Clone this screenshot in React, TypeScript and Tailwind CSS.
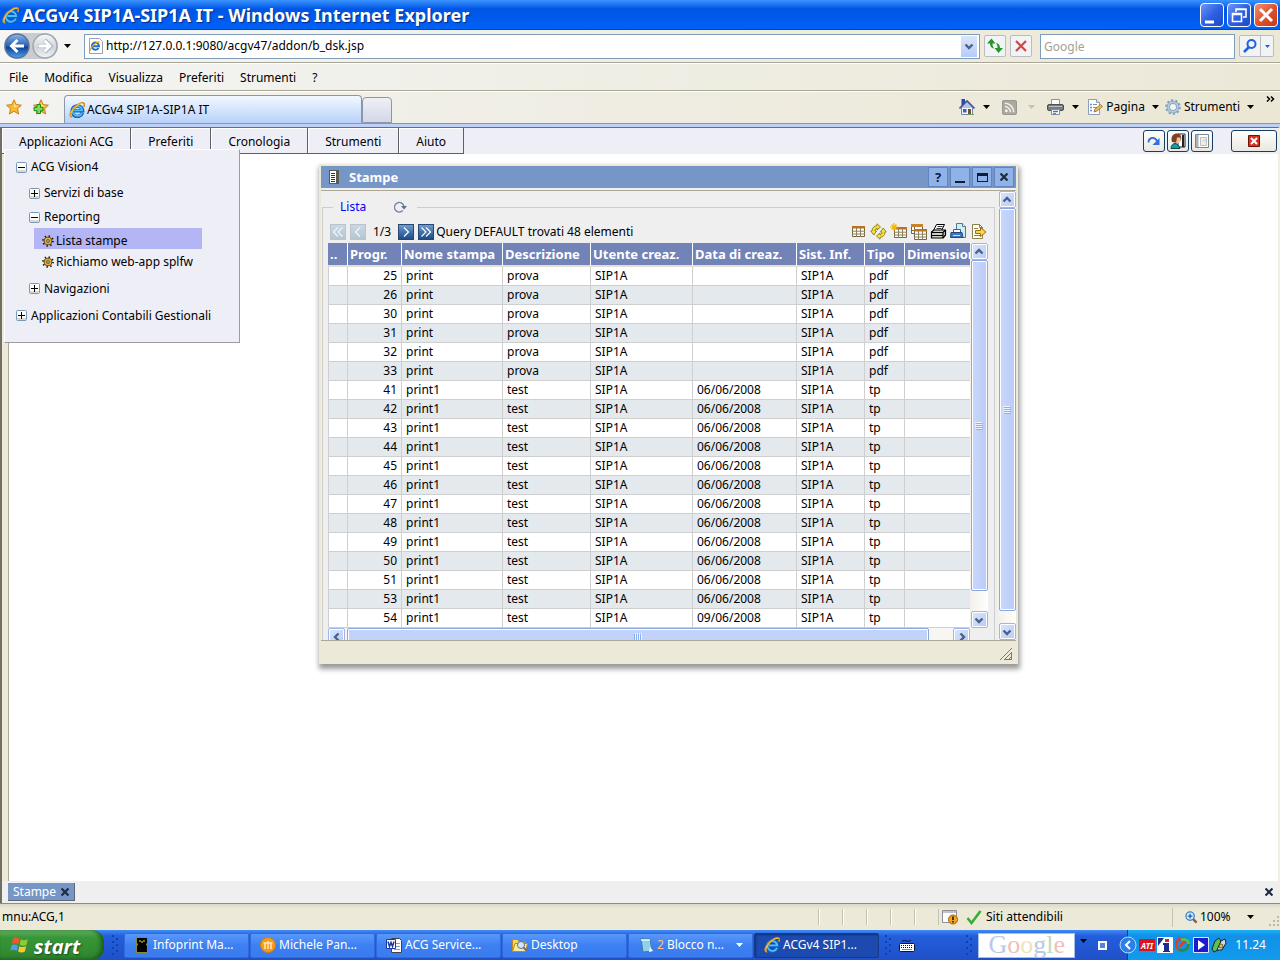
import type { ReactNode } from "react"
import clsx from "clsx"

const menus = ["Applicazioni ACG", "Preferiti", "Cronologia", "Strumenti", "Aiuto"]
const ieMenus = ["File", "Modifica", "Visualizza", "Preferiti", "Strumenti", "?"]

type Row = { id: number; name: string; descr: string; date: string; tipo: string }

const rows: Row[] = [
  ...[25, 26, 30, 31, 32, 33].map((id) => ({ id, name: "print", descr: "prova", date: "", tipo: "pdf" })),
  ...[41, 42, 43, 44, 45, 46, 47, 48, 49, 50, 51, 53].map((id) => ({
    id,
    name: "print1",
    descr: "test",
    date: "06/06/2008",
    tipo: "tp",
  })),
  { id: 54, name: "print1", descr: "test", date: "09/06/2008", tipo: "tp" },
]

const columns = [
  { label: "..", width: "w-5" },
  { label: "Progr.", width: "w-[54px]" },
  { label: "Nome stampa", width: "w-[101px]" },
  { label: "Descrizione", width: "w-[88px]" },
  { label: "Utente creaz.", width: "w-[102px]" },
  { label: "Data di creaz.", width: "w-[104px]" },
  { label: "Sist. Inf.", width: "w-[68px]" },
  { label: "Tipo", width: "w-10" },
  { label: "Dimension", width: "w-[90px]" },
]

function IeIcon({ className = "size-4" }: { className?: string }) {
  return (
    <svg viewBox="0 0 16 16" className={className} fill="none">
      <path d="M13.400 10.800A5.200 5.200 0 1 1 13.600 8.700H5" stroke="#0f5fc0" strokeWidth="3.600" />
      <path d="M13 10.800A4.900 4.900 0 1 1 13.300 8.400H5" stroke="#4fbdf8" strokeWidth="1.800" />
      <path d="M3.200 14.800C-.2 15.200 1 10 5 5.800 8.800 2 13.400-.2 14.900 1.300c.9.9.4 2.400-.3 3.500" stroke="#d9900f" strokeWidth="1.700" />
      <path d="M2.300 14C1 12 3 8.500 6 5.500 9 2.600 12.500.9 14 1.600" stroke="#ffd95a" strokeWidth=".9" />
    </svg>
  )
}

function Caret({ className = "text-black" }: { className?: string }) {
  return (
    <svg viewBox="0 0 7 4" className={clsx("h-1 w-[7px] shrink-0", className)}>
      <path d="M0 0h7L3.500 4z" fill="currentColor" />
    </svg>
  )
}

function Chevron({ dir }: { dir: "up" | "down" | "left" | "right" }) {
  const d = {
    up: "M1.500 6.500 5 3l3.500 3.500",
    down: "M1.500 3.500 5 7l3.500-3.500",
    left: "M6.500 1.500 3 5l3.500 3.500",
    right: "M3.500 1.500 7 5 3.500 8.500",
  }[dir]
  return (
    <svg viewBox="0 0 10 10" className="size-[10px] shrink-0">
      <path d={d} fill="none" stroke="#4d6185" strokeWidth="2.400" />
    </svg>
  )
}

function ScrollButton({ dir }: { dir: "up" | "down" | "left" | "right" }) {
  return (
    <button
      aria-label={`Scroll ${dir}`}
      className="flex size-[17px] shrink-0 items-center justify-center rounded-xs border border-[#9db5ea] bg-linear-to-br from-[#dbe5fe] to-[#b6cbf9] shadow-[inset_0_0_0_1px_#fff]"
    >
      <Chevron dir={dir} />
    </button>
  )
}

function VerticalScroll({ gap }: { gap: string }) {
  return (
    <div className="flex w-[18px] shrink-0 flex-col items-center bg-linear-to-r from-[#f3f1ec] to-[#fefefb]">
      <ScrollButton dir="up" />
      <div className="flex w-[17px] grow items-center justify-center rounded-xs border border-[#8ba7dd] bg-linear-to-r from-[#c9d8fc] to-[#b9cbf8] shadow-[inset_0_0_0_1px_#fff]">
        <Grip />
      </div>
      <div className={gap} />
      <ScrollButton dir="down" />
    </div>
  )
}

function Grip({ className }: { className?: string }) {
  return (
    <svg viewBox="0 0 8 8" className={clsx("size-2", className)}>
      <path d="M0 .5h7M0 2.500h7M0 4.500h7M0 6.500h7" stroke="#eef4fe" />
      <path d="M1 1.500h7M1 3.500h7M1 5.500h7M1 7.500h7" stroke="#8cb0f8" />
    </svg>
  )
}

function TreeBox({ open }: { open?: boolean }) {
  return (
    <svg viewBox="0 0 11 11" className="size-[11px] shrink-0">
      <rect x=".5" y=".5" width="10" height="10" rx="1" fill="#fdfdfb" stroke="#7898b5" />
      <path d="M1 8h9v2H1z" fill="#dcd8cb" />
      <path d={open ? "M2 5.500h7" : "M2 5.500h7M5.500 2v7"} stroke="#000" />
    </svg>
  )
}

function Gear() {
  return (
    <svg viewBox="0 0 12 12" className="size-3 shrink-0">
      <circle cx="6" cy="6" r="5" fill="none" stroke="#1d1608" strokeWidth="1.800" strokeDasharray="1.400 2.527" />
      <circle cx="6" cy="6" r="3.900" fill="#f3c04a" stroke="#3a2a06" strokeWidth=".8" />
      <path d="M6 2.500v7M2.500 6h7M3.600 3.600l4.800 4.800M8.400 3.600 3.600 8.400" stroke="#a8741a" strokeWidth=".5" />
      <circle cx="6" cy="6" r="1.300" fill="#fff" stroke="#2b2005" strokeWidth=".8" />
    </svg>
  )
}

function HomeIcon() {
  return (
    <svg viewBox="0 0 16 16" className="size-4">
      <path d="M2.500 8v7.500h11V8L8 2.500z" fill="#f4f6fb" stroke="#7684a5" />
      <path d="M2.500 0h3.500v4.500L2.500 7z" fill="#2a49b5" />
      <path d="M2 9 8.500 2.500 14.500 9z" fill="#b8c3de" />
      <path d="M.5 9.500 8 2l7.500 7.500" fill="none" stroke="#44549b" strokeWidth="1.600" />
      <path d="M9 10h3v5.500H9z" fill="#7b4d34" />
      <path d="M4 10h3.500v3.500H4z" fill="#2f68c4" />
      <path d="M9 15.500h6" stroke="#71a455" />
    </svg>
  )
}

function RssIcon() {
  return (
    <svg viewBox="0 0 16 16" className="size-[15px]">
      <rect x=".5" y=".5" width="15" height="15" rx="1.500" fill="#aaa89f" stroke="#96948b" />
      <circle cx="4.600" cy="11.400" r="1.600" fill="#f2f0e6" />
      <path d="M3 7a6 6 0 0 1 6 6M3 3.500A9.500 9.500 0 0 1 12.500 13" fill="none" stroke="#f2f0e6" strokeWidth="1.700" />
    </svg>
  )
}

function PrinterIcon() {
  return (
    <svg viewBox="0 0 17 16" className="h-4 w-[17px]">
      <path d="M4.500.5h8v6h-8z" fill="#fbfbfb" stroke="#8f9297" />
      <rect x=".5" y="5.500" width="16" height="6" rx="1.500" fill="#777b82" stroke="#4c4f55" />
      <path d="M2 7.500h13" stroke="#b9bdc4" />
      <path d="M4.500 10.500h8v5h-8z" fill="#fff" stroke="#888c92" />
      <path d="M6 12.500h5" stroke="#2d7fd1" strokeWidth="1.500" />
      <path d="M6 14.500h3" stroke="#4ca63b" />
    </svg>
  )
}

function PageEditIcon() {
  return (
    <svg viewBox="0 0 16 16" className="size-4">
      <path d="M1.500.5h8l3 3v12h-11z" fill="#fcfdff" stroke="#8d9db7" />
      <path d="M9.500.5v3h3" fill="#dce6f6" stroke="#8d9db7" />
      <path d="M3 5.500h2M3 8.500h2M3 11.500h2" stroke="#6f8fca" strokeWidth="1.500" />
      <path d="M6 5.500h4M6 8.500h4" stroke="#8a8f99" />
      <path d="m7 13 1-3 5.500-4.500 2 2L10 12z" fill="#edbd55" stroke="#8c6b39" strokeWidth=".8" />
    </svg>
  )
}

function ToolsIcon() {
  return (
    <svg viewBox="0 0 16 16" className="size-4" fill="none">
      <circle cx="8" cy="8" r="6.900" stroke="#7f9fbe" strokeWidth="1.800" strokeDasharray="2.300 2.035" />
      <circle cx="8" cy="8" r="4.600" stroke="#86a5c4" strokeWidth="3.400" />
      <circle cx="8" cy="8" r="4.700" stroke="#b7cde1" strokeWidth="1.600" />
      <circle cx="8" cy="8" r="2.800" fill="#f5f4ee" />
    </svg>
  )
}

function Star({ add }: { add?: boolean }) {
  return (
    <svg viewBox="0 0 16 16" className="size-4">
      <path
        d="m8 .8 2.200 4.800 5.200.6-3.900 3.500 1.100 5.300L8 12.300 3.400 15l1.100-5.300L.6 6.200l5.200-.6z"
        fill="#fdb927"
        stroke="#c3761a"
        strokeWidth=".9"
      />
      <path d="m8 3 1.200 3.300 3.300.4L8 8.500z" fill="#ffe48a" />
      {add && <path d="M4 5.500h3.500V8.300H10v3.400H7.500v2.800H4v-2.800H1V8.300h3z" fill="#7bdc56" stroke="#168a1b" />}
    </svg>
  )
}

function NavArrow({ back }: { back?: boolean }) {
  return (
    <svg viewBox="0 0 26 26" className="size-[26px]">
      <defs>
        <linearGradient id="navBlue" x1="0" y1="0" x2="0" y2="1">
          <stop offset="0" stopColor="#8db5ea" />
          <stop offset=".5" stopColor="#2460b8" />
          <stop offset=".55" stopColor="#0d3f96" />
          <stop offset="1" stopColor="#4aa5f0" />
        </linearGradient>
        <linearGradient id="navGrey" x1="0" y1="0" x2="0" y2="1">
          <stop offset="0" stopColor="#f8fafb" />
          <stop offset=".55" stopColor="#cfd5dc" />
          <stop offset="1" stopColor="#f1f4f7" />
        </linearGradient>
      </defs>
      <circle cx="13" cy="13" r="12" fill={back ? "url(#navBlue)" : "url(#navGrey)"} stroke={back ? "#5c7394" : "#a1a7b0"} strokeWidth="1.500" />
      <path
        d={back ? "M20 13H8m5.500-6L7.500 13l6 6" : "M6 13h12m-5.500-6 6 6-6 6"}
        fill="none"
        stroke={back ? "#fff" : "#a9b0ba"}
        strokeWidth={back ? "3" : "4.200"}
      />
      {!back && <path d="M6.500 13h11m-5-5.500 5.500 5.500-5.500 5.500" fill="none" stroke="#fff" strokeWidth="2.800" />}
    </svg>
  )
}

function GridIcon({ star, double }: { star?: boolean; double?: boolean }) {
  return (
    <svg viewBox="0 0 17 17" className="size-[17px]">
      {double && (
        <>
          <path d="M1.500 1.500h11v9h-11z" fill="#fff" stroke="#7a6546" />
          <path d="M1 1h12v3H1z" fill="#c8832c" />
          <path d="M1 7.500h10M4.500 4v7" stroke="#7a6546" />
        </>
      )}
      <g transform={double ? "translate(2 3)" : star ? "translate(2 1)" : undefined}>
        <path d="M2.500 3.500h12v10h-12z" fill="#fff" stroke="#6f6445" />
        <path d="M2 3h13v2.500H2z" fill="#b8741f" />
        <path d="M2 8.200h13M2 11h13M6.500 5v9M10.500 5v9" stroke="#8a805c" />
      </g>
      {star && <path d="M4 0v8M0 4h8M1.500 1.500l5 5M6.500 1.500l-5 5" stroke="#f5b800" strokeWidth="1.200" />}
    </svg>
  )
}

function ReloadIcon() {
  return (
    <svg viewBox="0 0 17 17" className="size-[17px]" strokeLinejoin="round">
      <path d="M7 2.500C4 3 2 5 2 8L.8 8l3 4 2.700-4H5c0-1.500.8-2.600 2-3v2l3.500-3L7 .8z" fill="#f6e33a" stroke="#8d7b10" strokeWidth=".9" />
      <path d="M10 14.500c3-.5 5-2.500 5-5.500h1.200l-3-4-2.700 4H12c0 1.500-.8 2.600-2 3v-2l-3.500 3L10 16.200z" fill="#f6e33a" stroke="#8d7b10" strokeWidth=".9" />
    </svg>
  )
}

function PrintBlackIcon() {
  return (
    <svg viewBox="0 0 17 17" className="size-[17px]" strokeLinejoin="round">
      <path d="m6.500 1.500 8 0-3 6h-8z" fill="#fff" stroke="#000" />
      <path d="M7.500 3.500h5M6.500 5.500h5" stroke="#000" strokeWidth=".8" />
      <path d="m1.500 9 2.500-2h11.500v5L13 15H1.500z" fill="#cfcfcf" stroke="#000" strokeWidth="1.200" />
      <path d="M1.500 9.500H13L15.500 7M13 9.500V15M2 12.500h11" fill="none" stroke="#000" strokeWidth="1.200" />
      <path d="M9 11h2.500" stroke="#f5e10b" />
    </svg>
  )
}

function PrintBlueIcon() {
  return (
    <svg viewBox="0 0 17 17" className="size-[17px]">
      <path d="M6.500.5h6l3 3v11h-9z" fill="#d3ecf2" stroke="#4d7c92" />
      <path d="M12.500.5v3h3" fill="#fff" stroke="#4d7c92" />
      <path d="M3.500 6.500h7v3h-7z" fill="#fff" stroke="#3c629c" />
      <path d="M1 9.500h11l1 5H.5z" fill="#3e77c2" stroke="#23477f" />
      <path d="M3 12.500h7" stroke="#bcdcf7" />
    </svg>
  )
}

function ExportIcon() {
  return (
    <svg viewBox="0 0 17 17" className="size-[17px]">
      <path d="M2.500 1.500h7l3 3v11h-10z" fill="#fffef4" stroke="#897f4f" />
      <path d="M9.500 1.500v3h3M4 5.500h4M4 12.500h6" fill="none" stroke="#897f4f" />
      <path d="M5.500 7.500h5v-3l5.500 4.500-5.500 4.500v-3h-5z" fill="#fcd54d" stroke="#9b6b10" />
    </svg>
  )
}

function Pager({ glyph, on }: { glyph: string; on?: boolean }) {
  return (
    <button
      aria-label="Pagina"
      className={clsx(
        "size-4 border",
        on ? "border-[#28466f] bg-linear-to-b from-[#6d9ccf] to-[#1c4c88]" : "border-[#b9c4ce] bg-linear-to-b from-[#cbd8e3] to-[#b6c5d2]"
      )}
    >
      <svg viewBox="0 0 14 14" fill="none" stroke={on ? "#fff" : "#f3f6f9"} strokeWidth="1.200">
        <path d={glyph} />
      </svg>
    </button>
  )
}

function XpButton({ label, close, children }: { label: string; close?: boolean; children: ReactNode }) {
  return (
    <button
      aria-label={label}
      className={clsx(
        "size-6 rounded-[4px] border border-white",
        close ? "bg-linear-to-br from-[#ee8e74] via-[#e0532c] to-[#c23a14]" : "bg-linear-to-br from-[#6f95f3] via-[#2f60e3] to-[#1c49c9]"
      )}
    >
      <svg viewBox="0 0 22 22" fill="none" stroke="#fff">
        {children}
      </svg>
    </button>
  )
}

function WinButton({ label, children }: { label: string; children: ReactNode }) {
  return (
    <button
      aria-label={label}
      className="flex size-5 items-center justify-center border border-[#6484bd] bg-[#8fb2e8] text-[13px] leading-none font-bold text-[#111c33]"
    >
      {children}
    </button>
  )
}

function SmallX() {
  return (
    <svg viewBox="0 0 8 8" className="size-2">
      <path d="m.5.5 7 7M7.500.5l-7 7" stroke="#1f2c42" strokeWidth="2.200" />
    </svg>
  )
}

function AppButton({ label, children }: { label: string; children: ReactNode }) {
  return (
    <button aria-label={label} className="flex size-[22px] items-center justify-center rounded-[3px] border border-[#123e68] bg-linear-to-b from-white to-[#e9e7df]">
      {children}
    </button>
  )
}

function TreeItem({ className, icon, children }: { className: string; icon: ReactNode; children: ReactNode }) {
  return (
    <li className={clsx("flex items-center", className)}>
      {icon}
      <a href="#" className="whitespace-nowrap">
        {children}
      </a>
    </li>
  )
}

function TaskButton({ icon, active, children }: { icon: ReactNode; active?: boolean; children: ReactNode }) {
  return (
    <button
      className={clsx(
        "flex h-[25px] w-[125px] shrink-0 items-center gap-[3px] rounded-xs border px-[9px] text-left text-white",
        active
          ? "border-[#163a8a] bg-[#1c4aae] shadow-[inset_1px_1px_2px_#0f3182]"
          : "border-[#2f6ade] bg-linear-to-b from-[#5a97fa] via-[#3c80f2] to-[#3a7bee]"
      )}
    >
      {icon}
      {children}
    </button>
  )
}

function Dots() {
  return (
    <svg viewBox="0 0 6 20" className="h-5 w-[6px] shrink-0" fill="#123fae">
      <path d="M0 0h2v2H0zM4 3h2v2H4zM0 6h2v2H0zM4 9h2v2H4zM0 12h2v2H0zM4 15h2v2H4zM0 18h2v2H0z" />
    </svg>
  )
}

function TitleBar() {
  return (
    <header className="flex h-[30px] items-center bg-linear-to-b from-[#3a93ff] via-[#0055e5] via-30% to-[#0062f8] pr-[2px] pl-[2px] shadow-[inset_0_-1px_0_#0042c8]">
      <IeIcon className="size-[17px]" />
      <h1 className="ml-[3px] grow font-['Noto_Sans','Open_Sans',sans-serif] text-[18px] leading-6 font-bold text-white [text-shadow:1px_1px_1px_#0a2a80]">
        ACGv4 SIP1A-SIP1A IT - Windows Internet Explorer
      </h1>
      <div className="flex gap-[3px]">
        <XpButton label="Riduci a icona">
          <path d="M4 18h9" strokeWidth="3" />
        </XpButton>
        <XpButton label="Ripristina">
          <path d="M8 8V5h10v8h-3M4.500 9.500h9v8h-9zM4 10.500h10M8 5.500h10" strokeWidth="1.600" />
        </XpButton>
        <XpButton label="Chiudi" close>
          <path d="m5 5 12 12M17 5 5 17" strokeWidth="3" />
        </XpButton>
      </div>
    </header>
  )
}

function AddressBar() {
  return (
    <div className="flex h-8 items-center bg-linear-to-r from-[#f5f5f5] via-[#f0eee4] to-[#ece8d6] pr-[6px] pl-1">
      <div className="flex rounded-full bg-[#c9ccd1]">
        <button aria-label="Indietro">
          <NavArrow back />
        </button>
        <button aria-label="Avanti" className="ml-[2px]">
          <NavArrow />
        </button>
      </div>
      <button aria-label="Pagine recenti" className="mx-[6px]">
        <Caret />
      </button>
      <div className="ml-[7px] flex h-[25px] grow items-center border border-[#7f9db9] bg-white pr-[2px] pl-[3px]">
        <svg viewBox="0 0 16 16" className="size-4">
          <path d="M1.500.5h10l3 3v12h-13z" fill="#fff" stroke="#9aa0ac" />
          <path d="M10.500 10A3.600 3.600 0 1 1 11 8.200H4.500" fill="none" stroke="#1b72cf" strokeWidth="2" />
          <path d="M2.500 12.500c-.5-3 6-9.500 9.300-8.500" fill="none" stroke="#e5a020" strokeWidth="1.200" />
        </svg>
        <input aria-label="Indirizzo" defaultValue="http://127.0.0.1:9080/acgv47/addon/b_dsk.jsp" className="ml-[2px] grow bg-transparent outline-none" />
        <button aria-label="Mostra indirizzi" className="flex h-[21px] w-4 items-center justify-center bg-linear-to-b from-[#dbe6fd] to-[#b5cbf7]">
          <Chevron dir="down" />
        </button>
      </div>
      <button aria-label="Aggiorna" className="ml-1 size-[22px] rounded-xs border border-[#b9bcc4] bg-[#f2f3f5]">
        <svg viewBox="0 0 20 20" fill="#26952a">
          <path d="M6.500 2.500 2 7.500h3c0 3 1.500 4.500 4 5-1-1.200-1.500-2.500-1.500-5h3z" />
          <path d="m13.500 17 4.500-5h-3c0-3-1.500-4.500-4-5 1 1.200 1.500 2.500 1.500 5h-3z" />
        </svg>
      </button>
      <button aria-label="Interrompi" className="ml-1 size-[22px] rounded-xs border border-[#b9bcc4] bg-[#f2f3f5]">
        <svg viewBox="0 0 20 20">
          <path d="m5 5 10 10M15 5 5 15" stroke="#cf4747" strokeWidth="2.200" />
        </svg>
      </button>
      <input
        aria-label="Cerca"
        placeholder="Google"
        className="ml-2 h-[25px] w-[195px] border border-[#7f9db9] bg-white px-[3px] outline-none placeholder:text-[#a3a193]"
      />
      <div className="ml-1 flex h-[22px] w-[35px] rounded-xs border border-[#b9bcc4] bg-[#f2f3f5]">
        <button aria-label="Avvia ricerca" className="w-[21px] border-r border-[#b9bcc4]">
          <svg viewBox="0 0 20 20" fill="none" stroke="#2160dd">
            <circle cx="11.500" cy="8" r="4" strokeWidth="2" />
            <path d="m9 11-5 5" strokeWidth="2.500" />
          </svg>
        </button>
        <button aria-label="Opzioni di ricerca" className="flex grow items-center justify-center">
          <svg viewBox="0 0 7 4" className="h-[3px] w-[5px]">
            <path d="M0 0h7L3.500 4z" fill="#2160dd" />
          </svg>
        </button>
      </div>
    </div>
  )
}

function TabRow() {
  return (
    <div className="flex h-8 items-end border-t border-white bg-linear-to-r from-[#f3f3f1] via-[#efede2] to-[#ebe7d4]">
      <button aria-label="Centro preferiti" className="mb-2 ml-[6px]">
        <Star />
      </button>
      <button aria-label="Aggiungi a preferiti" className="mb-2 ml-[11px]">
        <Star add />
      </button>
      <button className="ml-[15px] flex h-7 w-[298px] items-center gap-[2px] rounded-t-[4px] border border-b-0 border-[#8c96ab] bg-linear-to-b from-[#f4f8fe] via-[#d5e5fc] to-[#b9d2fa] px-1">
        <IeIcon />
        ACGv4 SIP1A-SIP1A IT
      </button>
      <button aria-label="Nuova scheda" className="h-[26px] w-[30px] rounded-t-[4px] border border-[#8c96ab] bg-linear-to-b from-[#eff0f6] to-[#d3d8e8]" />
      <div className="mb-[5px] ml-auto flex items-center pr-[5px]">
        <button aria-label="Pagina iniziale" className="flex items-center gap-2">
          <HomeIcon />
          <Caret />
        </button>
        <button aria-label="Feed" className="ml-3 flex items-center gap-[11px]">
          <RssIcon />
          <Caret className="text-[#c5c2b5]" />
        </button>
        <button aria-label="Stampa" className="ml-3 flex items-center gap-2">
          <PrinterIcon />
          <Caret />
        </button>
        <button className="ml-2 flex items-center gap-[3px]">
          <PageEditIcon />
          Pagina
          <span className="ml-1">
            <Caret />
          </span>
        </button>
        <button className="ml-[6px] flex items-center gap-[3px]">
          <ToolsIcon />
          Strumenti
          <span className="ml-1">
            <Caret />
          </span>
        </button>
        <button aria-label="Altri comandi" className="mb-4 ml-3">
          <svg viewBox="0 0 9 6" className="h-[6px] w-[9px]">
            <path d="m1 .5 2.500 2.500L1 5.500M5 .5 7.500 3 5 5.500" fill="none" stroke="#000" strokeWidth="1.500" />
          </svg>
        </button>
      </div>
    </div>
  )
}

function AppMenu() {
  return (
    <nav className="flex h-[26px] items-start bg-[#eeeef7] pr-px">
      {menus.map((m) => (
        <button key={m} className="h-[26px] border-r border-b border-[#5f5f66] px-[17px] pt-[2px] shadow-[inset_1px_1px_0_#fff]">
          {m}
        </button>
      ))}
      <div className="mt-[2px] ml-auto flex gap-[2px]">
        <AppButton label="Ripeti">
          <svg viewBox="0 0 14 14" className="size-[14px]" fill="none">
            <path d="M1.500 8.500C1.500 3.500 7.500 2 10 7" stroke="#2f6fe0" strokeWidth="1.800" />
            <path d="M12.500 4v7h-7z" fill="#2f6fe0" />
          </svg>
        </AppButton>
        <AppButton label="Utente">
          <svg viewBox="0 0 16 16" className="size-4">
            <path d="M8 1h7v13H8z" fill="#fff" stroke="#222" />
            <path d="M12 2h2v12h-2z" fill="#222" />
            <path d="M2 9C0 3 4 .5 7 .5S12 3 11 7l-3 3z" fill="#7b4222" />
            <path d="M7 4.500h3.500v4L8 10.500H6z" fill="#f0c09a" />
            <path d="M1 15.500c0-3 2-5 4-5s4 2 5 5z" fill="#159da0" stroke="#0a4a55" />
          </svg>
        </AppButton>
        <AppButton label="Pannello">
          <svg viewBox="0 0 14 14" className="size-[14px]">
            <path d="M.5.5h13v13H.5z" fill="#fff" stroke="#7c8794" />
            <path d="M1 1h2.500v12H1z" fill="#a9b1bb" />
            <path d="M5.500 3.500h6v8h-6z" fill="#f2efd7" stroke="#b9c0c9" />
            <path d="M8 5h3v3H8z" fill="#cfe0f4" />
          </svg>
        </AppButton>
        <button
          aria-label="Esci"
          className="ml-4 flex h-[22px] w-[46px] items-center justify-center rounded-[3px] border border-[#123e68] bg-linear-to-b from-white to-[#e9e7df]"
        >
          <svg viewBox="0 0 12 12" className="size-3">
            <path d="M.5.5h11v11H.5z" fill="#d8321f" stroke="#6a1410" />
            <path d="m3 3 6 6M9 3 3 9" stroke="#fff" strokeWidth="2" />
          </svg>
        </button>
      </div>
    </nav>
  )
}

function TreeMenu() {
  return (
    <ul className="absolute -top-[5px] left-[2px] z-20 h-[194px] w-[236px] border-t border-r border-b border-l border-t-white border-r-[#9b9ba3] border-b-[#9b9ba3] border-l-white bg-[#eeeef7] pt-1">
      <TreeItem className="h-[26px] gap-1 pl-[11px]" icon={<TreeBox open />}>
        ACG Vision4
      </TreeItem>
      <TreeItem className="h-[26px] gap-1 pl-6" icon={<TreeBox />}>
        Servizi di base
      </TreeItem>
      <TreeItem className="h-[22px] gap-1 pl-6" icon={<TreeBox open />}>
        Reporting
      </TreeItem>
      <TreeItem className="ml-[29px] h-[21px] w-[168px] gap-[2px] bg-[#b3b5f5] pt-1 pl-2" icon={<Gear />}>
        Lista stampe
      </TreeItem>
      <TreeItem className="h-[26px] gap-[2px] pl-[37px]" icon={<Gear />}>
        Richiamo web-app splfw
      </TreeItem>
      <TreeItem className="h-[27px] gap-1 pl-6" icon={<TreeBox />}>
        Navigazioni
      </TreeItem>
      <TreeItem className="h-[27px] gap-1 pl-[11px]" icon={<TreeBox />}>
        Applicazioni Contabili Gestionali
      </TreeItem>
    </ul>
  )
}

function PrintTable() {
  return (
    <div className="flex">
      <div className="w-[642px] overflow-hidden">
        <table className="w-[667px] table-fixed border-separate border-spacing-0">
          <thead>
            <tr>
              {columns.map((c) => (
                <th
                  key={c.label}
                  className={clsx(
                    "h-6 border-r border-b-2 border-r-white border-b-[#e3dfd2] bg-[#7183b7] pl-[2px] text-left text-[13px] font-bold whitespace-nowrap text-white",
                    c.width
                  )}
                >
                  {c.label}
                </th>
              ))}
            </tr>
          </thead>
          <tbody className="[&_td]:h-[19px] [&_td]:border-r [&_td]:border-b [&_td]:border-[#cfcfcf] [&_td]:pl-1 [&_td]:leading-4">
            {rows.map((r) => (
              <tr key={r.id} className="odd:bg-white even:bg-[#e3e9ed]">
                <td className="border-l" />
                <td className="pr-1 text-right">{r.id}</td>
                <td>{r.name}</td>
                <td>{r.descr}</td>
                <td>SIP1A</td>
                <td>{r.date}</td>
                <td>SIP1A</td>
                <td>{r.tipo}</td>
                <td />
              </tr>
            ))}
          </tbody>
        </table>
      </div>
      <VerticalScroll gap="h-5" />
    </div>
  )
}

function StampeWindow() {
  return (
    <section className="absolute top-[10px] left-[317px] z-10 w-[699px] border-2 border-[#ece9d8] bg-[#efefef] shadow-[1px_4px_5px_1px_rgba(0,0,0,0.4)]">
      <div className="flex h-[22px] items-center bg-[#7796c8] pl-2 text-white">
        <svg viewBox="0 0 10 14" className="h-[14px] w-[10px]">
          <path d="M0 0h10v14H0z" fill="#5b5b52" />
          <path d="M1 1h6v12H1z" fill="#fff" />
          <path d="M2 3.500h4M2 5.500h4M2 7.500h4M2 9.500h4M2 11.500h4" stroke="#333" />
        </svg>
        <h2 className="ml-[10px] grow text-[13px] font-bold">Stampe</h2>
        <div className="mr-[2px] flex gap-[2px]">
          <WinButton label="Guida">?</WinButton>
          <WinButton label="Riduci">
            <span className="mt-[10px] h-[2px] w-[10px] bg-[#111c33]" />
          </WinButton>
          <WinButton label="Ingrandisci">
            <span className="h-[9px] w-[11px] border border-t-[3px] border-[#111c33]" />
          </WinButton>
          <WinButton label="Chiudi finestra">
            <SmallX />
          </WinButton>
        </div>
      </div>
      <div className="mt-[2px] flex border-t border-[#aca899]">
        <div className="min-w-0 grow pt-[7px] pr-[3px] pl-px">
          <fieldset className="border border-b-0 border-[#cdcdcd] pr-1 pl-[5px]">
            <legend className="ml-[5px] flex h-[18px] w-[84px] items-center gap-7 pl-[7px] text-[#0000ff]">
              Lista
              <button aria-label="Ricarica">
                <svg viewBox="0 0 13 12" className="h-3 w-[13px]" fill="none">
                  <path d="M8.800 9.500A4.800 4.800 0 1 1 10 5.500" stroke="#6f80a0" strokeWidth="1.300" />
                  <path d="M7 5h6l-3 3.500z" fill="#5d6e90" />
                </svg>
              </button>
            </legend>
            <div className="mt-[6px] flex h-[19px] items-center">
              <div className="ml-[2px] flex items-center gap-1">
                <Pager glyph="M7 2.500 2.500 7 7 11.500M11.500 2.500 7 7l4.500 4.500" />
                <Pager glyph="M9 2.500 4.500 7 9 11.500" />
                <span className="mx-[3px]">1/3</span>
                <Pager on glyph="M5 2.500 9.500 7 5 11.500" />
                <Pager on glyph="M2.500 2.500 7 7l-4.500 4.500M7 2.500 11.500 7 7 11.500" />
              </div>
              <span className="ml-[2px]">Query DEFAULT trovati 48 elementi</span>
              <div className="mr-[3px] ml-auto flex gap-[3px]">
                {[
                  ["Tabella", <GridIcon />],
                  ["Aggiorna elenco", <ReloadIcon />],
                  ["Nuovo", <GridIcon star />],
                  ["Copia", <GridIcon double />],
                  ["Stampa elenco", <PrintBlackIcon />],
                  ["Anteprima", <PrintBlueIcon />],
                  ["Esporta", <ExportIcon />],
                ].map(([label, icon]) => (
                  <button key={label as string} aria-label={label as string}>
                    {icon}
                  </button>
                ))}
              </div>
            </div>
            <div className="mt-[2px]">
              <PrintTable />
            </div>
            <div className="flex h-3 w-[642px] items-start overflow-hidden bg-[#f7f6f2]">
              <ScrollButton dir="left" />
              <div className="ml-[2px] flex h-[17px] w-[582px] shrink-0 items-center justify-center rounded-xs border border-[#8ba7dd] bg-[#c2d3fb] shadow-[inset_0_0_0_1px_#fff]">
                <Grip className="rotate-90" />
              </div>
              <div className="grow" />
              <ScrollButton dir="right" />
            </div>
          </fieldset>
        </div>
        <VerticalScroll gap="h-3" />
      </div>
      <footer className="flex h-[22px] items-end justify-end border-t border-[#aca899] bg-[#ece9d8] px-1 pt-1 pb-[2px]">
        <svg viewBox="0 0 12 12" className="size-3" fill="none" stroke="#7d7b72">
          <path d="M0 12 12 0M4 12l8-8M4 11.500h8M11.500 4v8M8 12l4-4" />
        </svg>
      </footer>
    </section>
  )
}

function StatusBar() {
  return (
    <footer className="flex h-[27px] items-center border-t border-[#8e8c80] bg-linear-to-b from-[#dcd9ca] via-[#ece9d8] via-20% to-[#ece9d8] pl-[2px]">
      <span className="grow">mnu:ACG,1</span>
      {[0, 1, 2, 3, 4].map((i) => (
        <span key={i} className="h-4 w-6 border-l border-[#c5c2b2] shadow-[inset_1px_0_0_#fff]" />
      ))}
      <div className="flex w-[234px] items-center border-l border-[#c5c2b2] pl-[3px]">
        <svg viewBox="0 0 16 16" className="size-4">
          <path d="M.5 1.500h14v12H.5z" fill="#fff" stroke="#8c8f98" />
          <path d="M1 2h13v2H1z" fill="#bcc4d1" />
          <circle cx="11" cy="10.500" r="4.500" fill="#f2a51e" stroke="#a35e07" />
          <path d="M11 7.500v3.500M11 12v1.500" stroke="#000" strokeWidth="1.400" />
        </svg>
        <svg viewBox="0 0 16 16" className="ml-2 size-4">
          <path d="m1.500 9 4 5L14.500 2" fill="none" stroke="#39ae36" strokeWidth="2.600" />
        </svg>
        <span className="ml-1">Siti attendibili</span>
      </div>
      <div className="flex w-[108px] items-center border-l border-[#c5c2b2] pl-3">
        <svg viewBox="0 0 14 14" className="mr-[2px] size-[13px]">
          <path d="m8.500 8.500 4 4" stroke="#8b5a32" strokeWidth="2.400" />
          <circle cx="5.500" cy="5.500" r="4.500" fill="#d9edfd" stroke="#3b7fc8" strokeWidth="1.400" />
          <path d="M3 5.500h5M5.500 3v5" stroke="#1d5cac" strokeWidth="1.400" />
        </svg>
        <button className="flex items-center gap-4">
          100%
          <Caret />
        </button>
        <svg viewBox="0 0 11 11" className="mt-2 ml-auto size-[11px]" fill="#bdb9a6">
          <path d="M8 0h2v2H8zM8 4h2v2H8zM4 4h2v2H4zM8 8h2v2H8zM4 8h2v2H4zM0 8h2v2H0z" />
        </svg>
      </div>
    </footer>
  )
}

function TaskBar() {
  return (
    <div className="flex h-[30px] items-center bg-linear-to-b from-[#3f8bf3] via-[#245edb] via-20% to-[#1f50c8]">
      <button className="flex h-full w-[104px] shrink-0 items-center gap-1 rounded-r-xl bg-linear-to-b from-[#62b162] via-[#379637] via-25% to-[#2f8530] pl-[10px] shadow-[inset_-3px_-1px_4px_#1c5a1e]">
        <svg viewBox="0 0 20 18" className="h-[18px] w-5">
          <path d="M3 2.500C5.500 1 7.500 1.500 9.500 2.800L8.300 8.300C6.300 7 4.300 6.700 1.800 8z" fill="#f0582b" />
          <path d="M10.800 3.300c2.300 1.200 4.500 1.200 7-.3l-1.300 5.700c-2.300 1.300-4.500 1.200-6.900.1z" fill="#8fcb35" />
          <path d="M1.500 9.300c2.500-1.400 4.500-1 6.500.3l-1.200 5.300C4.700 13.500 2.700 13.300.3 14.700z" fill="#5b98f0" />
          <path d="M9.300 10.200c2.300 1.100 4.500 1.200 6.900-.1l-1.300 5.500c-2.300 1.300-4.500 1.200-6.800-.1z" fill="#fcc732" />
        </svg>
        <span className="pt-1 font-['Open_Sans','Noto_Sans',sans-serif] text-[20px] leading-6 font-bold text-white italic [text-shadow:1px_1px_2px_#1a4a1c]">
          start
        </span>
      </button>
      <div className="ml-2 flex items-center">
        <Dots />
      </div>
      <div className="ml-[6px] flex gap-px">
        <TaskButton
          icon={
            <svg viewBox="0 0 16 16" className="size-4 shrink-0">
              <path d="M2 0h12v16H2z" fill="#8a8830" />
              <path d="M3 1h10v5l-1 1v1l1 1v6H3V9l1-1V7L3 6z" fill="#000" />
              <path d="M5 4h2M9 4h2M7 5h2" stroke="#e7e04a" />
            </svg>
          }
        >
          Infoprint Ma...
        </TaskButton>
        <TaskButton
          icon={
            <svg viewBox="0 0 16 16" className="size-4 shrink-0">
              <circle cx="8" cy="8" r="7.500" fill="#f69a1d" stroke="#d77c0a" />
              <path d="M3.500 6h9M5 6v6M8 4v8M11 6v6" stroke="#ffe9b8" strokeWidth="1.500" />
            </svg>
          }
        >
          Michele Pan...
        </TaskButton>
        <TaskButton
          icon={
            <svg viewBox="0 0 16 16" className="size-4 shrink-0">
              <path d="M5.500 1.500h8l2 2v12h-10z" fill="#fff" stroke="#444" />
              <path d="M8 6.500h6M8 9.500h6M8 12.500h6" stroke="#8a9cc9" />
              <path d="M.5 2.500h9v9h-9z" fill="#fff" stroke="#1c35a0" />
              <path d="m2 4.500 1.500 5L5 5.500l1.500 4 1.500-5" fill="none" stroke="#1c35a0" strokeWidth="1.500" />
            </svg>
          }
        >
          ACG Service...
        </TaskButton>
        <TaskButton
          icon={
            <svg viewBox="0 0 16 16" className="size-4 shrink-0">
              <path d="M.5 2.500h5l1.500 2h6v10H.5z" fill="#f9d566" stroke="#b98a1d" />
              <path d="M3 6.500h12.500l-2 8H.5z" fill="#fde99b" stroke="#b98a1d" />
              <circle cx="9" cy="8" r="3.500" fill="#cfe8fb" stroke="#5a6f8c" />
              <path d="m11.500 10.500 3 3" stroke="#5a6f8c" strokeWidth="1.800" />
            </svg>
          }
        >
          Desktop
        </TaskButton>
        <TaskButton
          icon={
            <svg viewBox="0 0 16 16" className="size-4 shrink-0">
              <path d="m3 1.500 9 .5 2 12-9 1z" fill="#8fd0ec" stroke="#3e7f9f" />
              <path d="M3 3h9" stroke="#e5f5fb" strokeWidth="1.500" />
              <path d="m12 10 3 4-4 1z" fill="#fff" />
            </svg>
          }
        >
          <span className="text-[#ffc36a]">2</span>
          Blocco n...
          <span className="ml-auto">
            <Caret className="text-white" />
          </span>
        </TaskButton>
        <TaskButton active icon={<IeIcon className="size-4 shrink-0" />}>
          ACGv4 SIP1...
        </TaskButton>
      </div>
      <div className="ml-[6px] flex grow items-center">
        <Dots />
        <svg viewBox="0 0 16 14" className="ml-2 h-[14px] w-4">
          <path d="M3 3.500c3-3 5 2 9-1.500" fill="none" stroke="#0a1433" />
          <rect x=".5" y="5.500" width="15" height="8" rx="1" fill="#fff" stroke="#0a1433" />
          <path d="M2 7.500h12M2 9.500h12M3.500 11.500h9" stroke="#0a1433" strokeDasharray="1 1" />
        </svg>
      </div>
      <Dots />
      <div className="ml-[6px] flex h-[25px] w-[97px] items-center justify-center border border-[#a9bfe8] bg-white font-['Liberation_Serif',serif] text-[26px] leading-6">
        <span className="text-[#b9c8ea]">G</span>
        <span className="text-[#efc0bb]">o</span>
        <span className="text-[#f3e3ae]">o</span>
        <span className="text-[#b9c8ea]">g</span>
        <span className="text-[#bfdcbf]">l</span>
        <span className="text-[#efc0bb]">e</span>
      </div>
      <button aria-label="Opzioni Google" className="mb-2 ml-[5px]">
        <Caret />
      </button>
      <button aria-label="Ripristina barra" className="ml-[11px] size-[9px] border-2 border-white bg-[#5a83d8]" />
      <div className="ml-5 flex h-full shrink-0 items-center gap-[2px] border-l border-[#0b3b9c] bg-linear-to-b from-[#1cb0f5] via-[#1290e8] via-20% to-[#119bec] pr-[14px]">
        <button aria-label="Mostra icone nascoste" className="-ml-[9px]">
          <svg viewBox="0 0 18 18" className="size-[18px]">
            <circle cx="9" cy="9" r="8" fill="#2a80e8" stroke="#b5dcfa" />
            <path d="M11 5 7 9l4 4" fill="none" stroke="#fff" strokeWidth="2" />
          </svg>
        </button>
        <svg viewBox="0 0 16 16" className="size-4">
          <path d="M0 2h16v12H0z" fill="#d9141c" />
          <text x="8" y="11.500" fontSize="8" fontWeight="700" fontStyle="italic" textAnchor="middle" fill="#fff">
            ATI
          </text>
        </svg>
        <svg viewBox="0 0 16 16" className="size-4">
          <path d="M0 0h16v16H0z" fill="#fff" />
          <path d="M1 1h6L1 9z" fill="#1b2d88" />
          <path d="M8 2h4v3H8z" fill="#d3202a" />
          <path d="M6 6h6v8h1v1H6v-1h1V8H6z" fill="#1b2d88" />
        </svg>
        <svg viewBox="0 0 16 16" className="size-4" fill="none" strokeWidth="2.600">
          <path d="M3 12A6 6 0 0 1 9 2" stroke="#e33a2a" />
          <path d="M6 2.500c6-1 9 3 7 7" stroke="#58c43e" />
          <path d="M13.500 7c0 5-5 8-10 5.500" stroke="#2c8b38" />
          <path d="M5 10c1-4 4-5 6-4" stroke="#e33a2a" />
        </svg>
        <svg viewBox="0 0 16 16" className="size-4">
          <path d="M.5.5h15v15H.5z" fill="#1a1ad0" stroke="#dfe6ff" />
          <path d="M5 3v10l7-5z" fill="#fff" />
        </svg>
        <svg viewBox="0 0 16 16" className="size-4">
          <path d="m1 12 3-8 4-3 2 3-3 9-4 2z" fill="#5ec24a" stroke="#123" />
          <path d="m6 13 4-9 4-2 1 4-4 7z" fill="#d9d9d9" stroke="#123" />
          <circle cx="10" cy="9" r="2" fill="#e3c62e" stroke="#123" strokeWidth=".6" />
        </svg>
        <time className="ml-[6px] text-white">11.24</time>
      </div>
    </div>
  )
}

export default function App() {
  return (
    <div className="flex min-h-screen flex-col overflow-hidden bg-white font-['Noto_Sans','DejaVu_Sans',sans-serif] text-[12px] leading-4 text-black">
      <TitleBar />
      <AddressBar />
      <nav className="flex h-[28px] items-center gap-4 border-t border-[#a9a697] bg-linear-to-r from-[#f3f4f4] via-[#efeee4] to-[#ece8d8] px-[9px] pt-[2px] shadow-[inset_0_1px_0_#fff]">
        {ieMenus.map((m) => (
          <button key={m}>{m}</button>
        ))}
      </nav>
      <div className="border-t border-[#a9a697]">
        <TabRow />
      </div>
      <div className="h-1 border-t border-[#8c96ab] bg-[#bfd0f7]" />
      <main className="flex grow flex-col border-t border-r-2 border-l-2 border-[#716f64] border-r-[#f1efe2]">
        <AppMenu />
        <div className="relative flex min-h-[520px] grow">
          <div className="w-[7px] border-r border-[#aca899] bg-[#ece9d8]" />
          <TreeMenu />
          <StampeWindow />
        </div>
        <div className="flex h-[22px] items-center justify-between bg-[#efefef] pr-[5px] pl-[6px]">
          <button className="flex h-[18px] items-center gap-[5px] border-r border-b border-[#5f6670] bg-[#7796c8] px-[5px] text-white">
            Stampe
            <SmallX />
          </button>
          <button aria-label="Chiudi tutto">
            <SmallX />
          </button>
        </div>
      </main>
      <StatusBar />
      <TaskBar />
    </div>
  )
}
